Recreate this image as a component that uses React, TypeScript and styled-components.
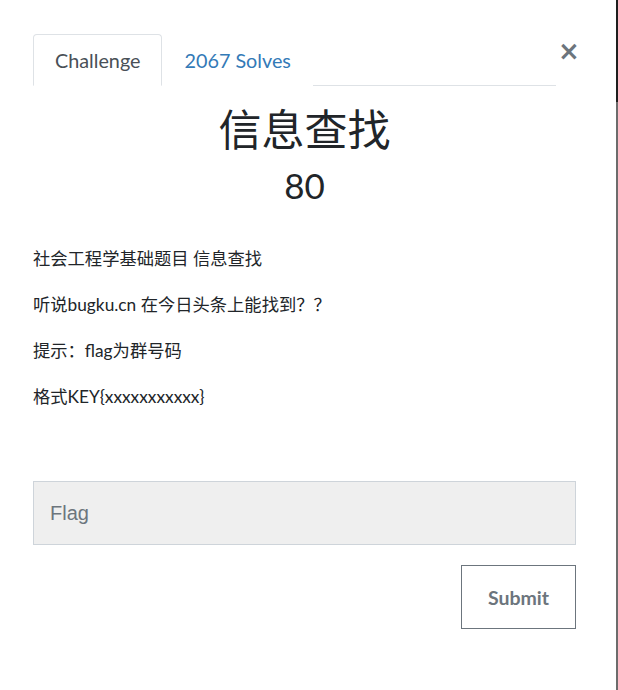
import React from 'react';
import styled, { createGlobalStyle } from 'styled-components';

const GlobalStyle = createGlobalStyle`
  html, body {
    margin: 0;
    padding: 0;
    background: #ffffff;
  }
  body {
    font-family: Lato, "Noto Sans CJK SC", sans-serif;
    color: #212529;
  }
`;

const Page = styled.div`
  display: flex;
  width: 618px;
  height: 690px;
  overflow: hidden;
`;

const Modal = styled.div`
  flex: 1;
  background: #ffffff;
  padding: 34px 40px 0 33px;
`;

const Backdrop = styled.div`
  width: 2px;
  display: flex;
  flex-direction: column;
`;

const BackdropPart = styled.div<{ $dark?: boolean }>`
  height: ${(p) => (p.$dark ? '102px' : 'auto')};
  flex: ${(p) => (p.$dark ? 'none' : 1)};
  background: ${(p) => (p.$dark ? '#1e1e1e' : '#6c6c6c')};
`;

const Header = styled.div`
  display: flex;
  align-items: flex-start;
`;

const Tabs = styled.ul`
  flex: 1;
  display: flex;
  margin: 0;
  padding: 0;
  list-style: none;
  border-bottom: 1px solid #dee2e6;
`;

const Tab = styled.li<{ $active?: boolean }>`
  height: 52px;
  box-sizing: border-box;
  display: flex;
  align-items: center;
  padding: 0 21px;
  margin-bottom: -1px;
  font-size: 19.8px;
  border: 1px solid ${(p) => (p.$active ? '#dee2e6' : 'transparent')};
  border-bottom-color: ${(p) => (p.$active ? '#ffffff' : 'transparent')};
  border-radius: 4px 4px 0 0;
  color: ${(p) => (p.$active ? '#495057' : '#337ab7')};
  background: #ffffff;
`;

const Close = styled.button`
  border: none;
  background: none;
  padding: 0;
  margin: 4px 1px 0 2px;
  width: 17px;
  font-family: "DejaVu Sans", sans-serif;
  font-size: 26px;
  font-weight: bold;
  line-height: 26px;
  color: #6c757d;
  cursor: pointer;
`;

const Title = styled.h2`
  margin: 19px 0 0;
  text-align: center;
  font-weight: 400;
  font-size: 43px;
  line-height: 50px;
`;

const Points = styled.h4`
  margin: 10px 0 0;
  text-align: center;
  font-weight: 400;
  font-size: 35px;
  line-height: 40px;
`;

const Description = styled.div`
  display: flex;
  flex-direction: column;
  gap: 22px;
  margin-top: 42px;
`;

const Para = styled.p`
  margin: 0;
  font-size: 17.3px;
  line-height: 24px;
`;

const FlagInput = styled.input`
  display: block;
  width: 100%;
  box-sizing: border-box;
  height: 64px;
  margin-top: 72px;
  padding: 0 16px;
  border: 1px solid #ced4da;
  background: #efefef;
  font-family: "Liberation Sans", Arial, sans-serif;
  font-size: 20px;
  color: #495057;
  outline: none;
  &::placeholder {
    color: #6c757d;
  }
`;

const Actions = styled.div`
  display: flex;
  justify-content: flex-end;
  margin-top: 20px;
`;

const SubmitButton = styled.button`
  width: 115px;
  height: 64px;
  border: 1px solid #6c757d;
  background: #ffffff;
  font-family: Lato, sans-serif;
  font-weight: 700;
  font-size: 19.5px;
  color: #6c757d;
  cursor: pointer;
`;

const paragraphs = [
  '社会工程学基础题目 信息查找',
  '听说bugku.cn 在今日头条上能找到？？',
  '提示：flag为群号码',
  '格式KEY{xxxxxxxxxxx}',
];

const App: React.FC = () => {
  return (
    <Page>
      <GlobalStyle />
      <Modal>
        <Header>
          <Tabs>
            <Tab $active>Challenge</Tab>
            <Tab>2067 Solves</Tab>
          </Tabs>
          <Close aria-label="Close">×</Close>
        </Header>

        <Title>信息查找</Title>
        <Points>80</Points>

        <Description>
          {paragraphs.map((text) => (
            <Para key={text}>{text}</Para>
          ))}
        </Description>

        <FlagInput placeholder="Flag" />

        <Actions>
          <SubmitButton>Submit</SubmitButton>
        </Actions>
      </Modal>
      <Backdrop>
        <BackdropPart $dark />
        <BackdropPart />
      </Backdrop>
    </Page>
  );
};

export default App;
